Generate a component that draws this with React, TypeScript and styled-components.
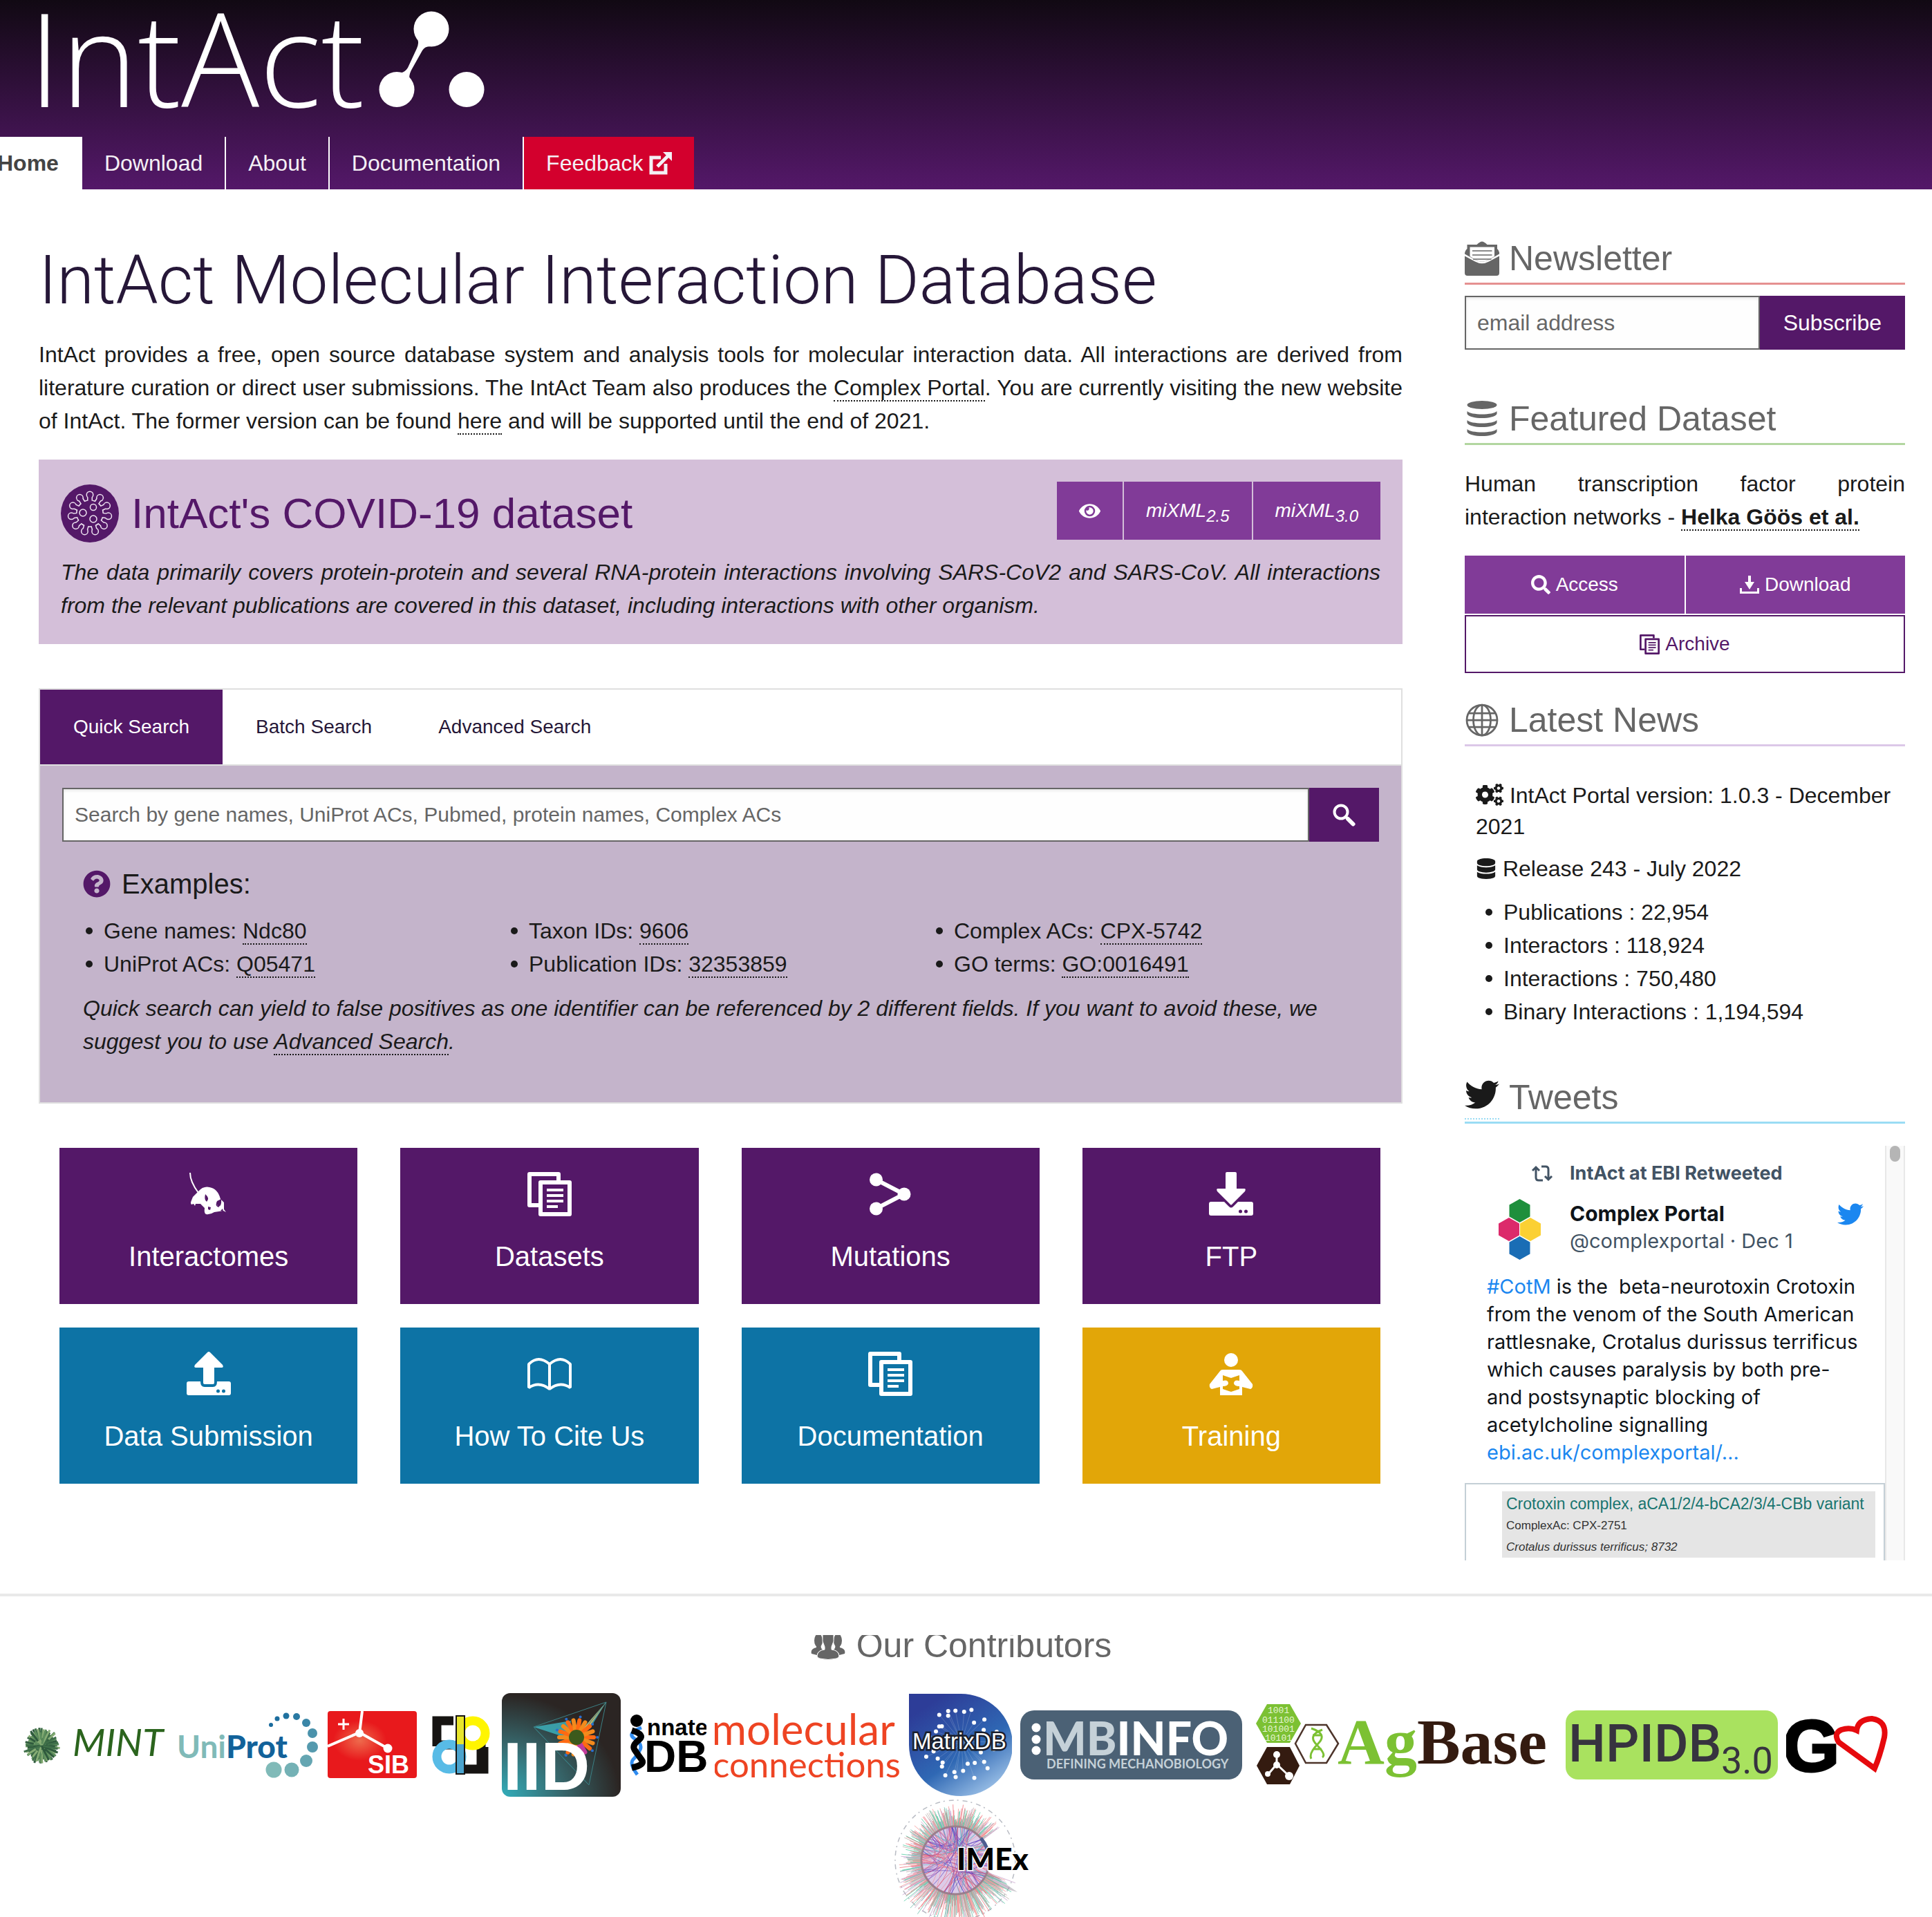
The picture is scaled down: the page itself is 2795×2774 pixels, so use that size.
import React from "react";
import styled, { createGlobalStyle } from "styled-components";
import { FaCogs, FaDatabase, FaEye, FaQuestionCircle, FaSearch, FaTwitter } from "react-icons/fa";

const color = {
  purple: "#541868",
  violet: "#813b98",
  blue: "#0d73a5",
  amber: "#e2a608",
  red: "#d3002d",
  ink: "#1a1a1a",
  grey: "#666666",
  line: "#dfdfdf",
  tweet: "#425364",
  link: "#1b87f0",
};

const sans = `"Liberation Sans", Arial, Helvetica, sans-serif`;
const tweetFont = `Inter, "Liberation Sans", sans-serif`;

const GlobalStyle = createGlobalStyle`
  *, *::before, *::after { box-sizing: border-box; }
  body {
    margin: 0;
    background: #fff;
    color: ${color.ink};
    font-family: ${sans};
    font-size: 32px;
    line-height: 48px;
  }
  h1, h2, h3, p, ul { margin: 0; padding: 0; font-weight: 400; }
  a { color: inherit; text-decoration: none; }
  button, input { font-family: inherit; border-radius: 0; }
  svg { display: block; flex: none; }
`;

/* ---------- header ---------- */

const Header = styled.header`
  background: linear-gradient(#110913, #541869);
`;

const Brand = styled.a`
  display: flex;
  height: 198px;
  padding-left: 50px;
`;

const Nav = styled.nav`
  display: flex;
  margin-left: -36px;
  height: 76px;
`;

const NavLink = styled.a<{ $tone?: "active" | "alert" }>`
  display: flex;
  align-items: center;
  gap: 8px;
  padding: 0 32px;
  color: ${(p) => (p.$tone === "active" ? "#444" : "#f4f0f5")};
  font-weight: ${(p) => (p.$tone === "active" ? 700 : 400)};
  background: ${(p) => (p.$tone === "active" ? "#fff" : p.$tone === "alert" ? color.red : "transparent")};
  & + & { border-left: 2px solid #fff; }
`;

/* ---------- page ---------- */

const Page = styled.main`
  display: grid;
  grid-template-columns: minmax(0, 1973fr) minmax(0, 637fr);
  column-gap: 90px;
  align-items: start;
  padding: 65px 39px 48px 56px;
`;

const Title = styled.h1`
  font-family: Roboto, ${sans};
  font-weight: 300;
  font-size: 98px;
  line-height: 134px;
  margin-bottom: 16px;
  color: #261738;
`;

const Text = styled.p<{ $italic?: boolean; $justify?: boolean }>`
  font-style: ${(p) => (p.$italic ? "italic" : "normal")};
  text-align: ${(p) => (p.$justify ? "justify" : "left")};
`;

const DottedLink = styled.a<{ $bold?: boolean }>`
  border-bottom: 2px dotted ${color.ink};
  font-weight: ${(p) => (p.$bold ? 700 : 400)};
`;

const Covid = styled.section`
  margin-top: 32px;
  padding: 32px;
  background: #d4bfd9;
`;

const CovidHead = styled.div`
  display: flex;
  justify-content: space-between;
  align-items: flex-start;
  margin-bottom: 16px;
`;

const CovidTitle = styled.h2`
  display: flex;
  align-items: center;
  gap: 18px;
  font-size: 62px;
  line-height: 91px;
  color: ${color.purple};
`;

const ButtonGroup = styled.div`
  display: flex;
  flex-wrap: wrap;
  gap: 2px;
`;

const Button = styled.a<{ $outline?: boolean; $grow?: string }>`
  display: flex;
  align-items: center;
  justify-content: center;
  gap: 8px;
  height: 84px;
  padding: 0 32px;
  flex: ${(p) => p.$grow || "none"};
  font-size: 28px;
  color: ${(p) => (p.$outline ? color.purple : "#fff")};
  background: ${(p) => (p.$outline ? "#fff" : color.violet)};
  border: ${(p) => (p.$outline ? `2px solid ${color.purple}` : "0")};
`;

const Formula = styled.em`
  white-space: nowrap;
  sub { font-size: 24px; line-height: 0; }
`;

/* ---------- search ---------- */

const SearchPanel = styled.section`
  margin-top: 64px;
  border: 2px solid ${color.line};
`;

const TabList = styled.div`
  display: flex;
  border-bottom: 2px solid ${color.line};
`;

const Tab = styled.button<{ $active?: boolean }>`
  border: 0;
  padding: 40px 48px;
  font-size: 28px;
  line-height: 28px;
  color: ${(p) => (p.$active ? "#fff" : "#261738")};
  background: ${(p) => (p.$active ? color.purple : "transparent")};
`;

const TabBody = styled.div`
  padding: 32px 32px 64px;
  background: #c4b4cb;
`;

const InputRow = styled.form`
  display: flex;
  height: 78px;
`;

const Input = styled.input<{ $size: number }>`
  flex: 1;
  min-width: 0;
  padding: 0 16px;
  border: 2px solid ${color.grey};
  background: #fefefe;
  box-shadow: inset 0 2px 4px rgba(10, 10, 10, 0.1);
  font-size: ${(p) => p.$size}px;
  &::placeholder { color: ${color.grey}; opacity: 1; }
`;

const Submit = styled.button`
  display: flex;
  align-items: center;
  border: 0;
  padding: 0 34px;
  font-size: 32px;
  color: #fff;
  background: ${color.purple};
`;

const Examples = styled.div`
  padding: 33px 30px 0;
`;

const ExamplesTitle = styled.h3`
  display: flex;
  align-items: center;
  gap: 16px;
  font-size: 40px;
  line-height: 56px;
  margin-bottom: 16px;
`;

const BulletList = styled.ul<{ $columns: number; $indent?: number }>`
  display: grid;
  grid-template-columns: repeat(${(p) => p.$columns}, 1fr);
  list-style: none;
  margin-bottom: 16px;
  padding-left: ${(p) => p.$indent ?? 0}px;
  li { display: flex; align-items: center; gap: 16px; white-space: pre; }
  li::before {
    content: "";
    width: 10px;
    height: 10px;
    margin-left: 4px;
    border-radius: 50%;
    background: ${color.ink};
  }
`;

/* ---------- tiles ---------- */

const Tiles = styled.div`
  display: grid;
  grid-template-columns: repeat(4, 1fr);
  gap: 34px 62px;
  margin-top: 64px;
  padding: 0 32px 0 30px;
`;

const Tile = styled.a<{ $bg: string }>`
  display: flex;
  flex-direction: column;
  align-items: center;
  gap: 30px;
  height: 226px;
  padding-top: 35px;
  font-size: 40px;
  line-height: 56px;
  color: #fff;
  background: ${(p) => p.$bg};
`;

/* ---------- sidebar ---------- */

const Side = styled.section<{ $space?: number }>`
  margin-bottom: ${(p) => p.$space ?? 65}px;
`;

const SideTitle = styled.h2<{ $rule: string; $space: number }>`
  display: flex;
  align-items: center;
  gap: 14px;
  font-size: 50px;
  line-height: 70px;
  color: ${color.grey};
  border-bottom: 3px solid ${(p) => p.$rule};
  margin-bottom: ${(p) => p.$space}px;
`;

const BirdLink = styled.a`
  align-self: flex-end;
  padding-bottom: 9px;
  margin-bottom: 3px;
  border-bottom: 2px dotted #9adcf4;
  color: ${color.ink};
`;

const DatasetButtons = styled(ButtonGroup)`
  margin-top: 32px;
`;

const News = styled.div`
  padding: 0 16px;
`;

const NewsLine = styled.p<{ $drop: number }>`
  line-height: 45px;
  margin-bottom: 16px;
  svg { display: inline-block; vertical-align: -${(p) => p.$drop}px; }
`;

const Timeline = styled.div`
  display: flex;
  height: 600px;
  overflow: hidden;
  font-family: ${tweetFont};
  line-height: 40px;
`;

const Tweet = styled.article`
  display: flex;
  flex-direction: column;
  flex: 1;
  min-width: 0;
`;

const TweetHead = styled.div`
  display: grid;
  grid-template-columns: 96px 1fr 36px;
  column-gap: 24px;
  padding: 20px 33px 0 32px;
`;

const Retweeted = styled.div`
  font-size: 27px;
  font-weight: 700;
  color: ${color.tweet};
`;

const RetweetCell = styled.div`
  display: flex;
  justify-content: flex-end;
  align-items: center;
`;

const TweetName = styled.div`
  padding-top: 18px;
  font-size: 29px;
  color: ${color.tweet};
  strong { display: block; font-size: 30px; color: #0f1419; }
`;

const AvatarCell = styled.div`
  padding: 16px 0 0;
`;

const BirdCell = styled.div`
  padding-top: 20px;
  color: ${color.link};
`;

const TweetText = styled.p`
  padding: 12px 20px 24px 32px;
  font-size: 29px;
  line-height: 40px;
  color: #0f1419;
  white-space: pre-wrap;
  a { color: ${color.link}; }
`;

const Card = styled.div`
  flex: 1;
  padding: 10px 12px 4px 52px;
  border: 2px solid #c4cfd6;
  border-bottom: 0;
  font-family: ${sans};
`;

const CardBody = styled.div`
  padding: 2px 6px 0;
  background: #e5e5e5;
  color: #333;
  font-size: 17px;
  line-height: 31px;
  white-space: nowrap;
  strong { display: block; font-weight: 400; font-size: 23px; line-height: 32px; color: #197570; }
  em { display: block; }
`;

const Track = styled.div`
  width: 29px;
  padding: 0 5px;
  border: solid #e8e8e8;
  border-width: 0 2px;
  background: #f9f9f9;
`;

const Thumb = styled.div`
  height: 23px;
  border-radius: 8px;
  background: #b5b5b5;
`;

/* ---------- contributors ---------- */

const Contributors = styled.footer`
  border-top: 4px solid #e9e9e9;
  padding-top: 56px;
`;

const ContributorsTitle = styled.h2`
  display: flex;
  align-items: center;
  justify-content: center;
  gap: 16px;
  height: 40px;
  padding: 0 14px 10px 0;
  overflow: hidden;
  font-size: 50px;
  line-height: 30px;
  color: ${color.grey};
`;

const LogoRow = styled.div`
  display: flex;
  flex-wrap: wrap;
  align-items: center;
  justify-content: center;
  column-gap: 12px;
  row-gap: 2px;
  margin-top: 44px;
  a { display: flex; align-items: center; }
`;

/* ---------- icons ---------- */

const IntActLogo = () => (
  <svg width="670" height="198" viewBox="50 0 670 198" fill="#fff" role="img" aria-label="IntAct">
    <text x="41" y="155" fontFamily="'Open Sans', sans-serif" fontWeight="300" fontSize="188">IntAct</text>
    <circle cx="624" cy="42" r="25.5" />
    <circle cx="574" cy="129.500" r="25.500" />
    <circle cx="675" cy="129.500" r="25.500" />
    <path d="M603 54 Q607 61 603 70 L590 98 Q585 106 578 105 L592 113 Q592 106 597 98 L611 73 Q615 66 625 67Z" />
  </svg>
);

const ExternalIcon = () => (
  <svg width="33" height="33" viewBox="0 0 33 33" fill="none" stroke="#f4f0f5">
    <path d="M17 8H3v22h21V17" strokeWidth="5" />
    <path d="M12 21 27 6" strokeWidth="5" />
    <path d="M20 0h13v13Z" fill="#f4f0f5" stroke="none" />
  </svg>
);

const petals = Array.from({ length: 11 }, (_, i) => (i * 2 * Math.PI) / 11 - Math.PI / 2);

const Lollipops = ({ fill, core, stem, knob }: { fill: string; core: number; stem: number; knob: number }) => (
  <g fill={fill} stroke="none">
    <circle cx="42" cy="42" r={core} />
    {petals.map((a) => (
      <g key={a}>
        <path d={`M42 42 L${42 + 27 * Math.cos(a)} ${42 + 27 * Math.sin(a)}`} stroke={fill} strokeWidth={stem} />
        <circle cx={42 + 27 * Math.cos(a)} cy={42 + 27 * Math.sin(a)} r={knob} />
      </g>
    ))}
  </g>
);

const VirusIcon = () => (
  <svg width="84" height="84" viewBox="0 0 84 84">
    <circle cx="42" cy="42" r="42" fill={color.purple} />
    <Lollipops fill="#efe4f2" core={20} stem={8} knob={5.5} />
    <Lollipops fill={color.purple} core={18.5} stem={5} knob={4} />
    <g fill="none" stroke="#efe4f2" strokeWidth="1.500">
      <circle cx="32" cy="41" r="5" />
      <circle cx="47" cy="33" r="4.500" />
      <circle cx="47" cy="50" r="5" />
    </g>
  </svg>
);

const MagnifierIcon = () => (
  <svg width="33" height="33" viewBox="0 0 33 33" fill="none" stroke="#fff">
    <circle cx="12" cy="12" r="9.500" strokeWidth="4" />
    <path d="M18.500 18.500 22 22" strokeWidth="4" />
    <path d="m22 22 7.500 7.500" strokeWidth="6" strokeLinecap="round" />
  </svg>
);

const TrayIcon = () => (
  <svg width="28" height="27" viewBox="0 0 28 27" fill="currentColor">
    <path d="M12 0h4v9h5l-7 11-7-11h5ZM0 18h3v5h22v-5h3v8H0Z" />
  </svg>
);

const CopyIcon = ({ size }: { size: number }) => (
  <svg width={size} height={size} viewBox="0 0 64 64" fill="none" stroke="currentColor" strokeLinejoin="round">
    <path d="M16 48H3V3h42v9" strokeWidth="6" />
    <path d="M19 15h42v46H19Z" strokeWidth="6" />
    <path d="M28 26h24M28 34h24M28 42h24M28 50h16" strokeWidth="4" />
  </svg>
);

const MailIcon = () => (
  <svg width="50" height="50" viewBox="0 0 100 100" fill={color.grey}>
    <path d="M0 43 30 59Q50 70 70 59L100 43V92Q100 100 92 100H8Q0 100 0 92Z" />
    <path d="M7 10H35Q44 1 50 1T65 10H94V22Q101 28 100 37L70 54Q50 65 30 54L0 37Q0 28 7 22Z" />
    <path d="M15 17H86V44L69 54Q50 65 31 54L15 44Z" fill="#fff" />
    <path d="M22 28H79M22 40H79M24 52H77" stroke={color.grey} strokeWidth="3" />
  </svg>
);

const disc = (y: number) => `M7 ${y}C18 ${y + 12} 82 ${y + 12} 93 ${y}V${y + 8}C84 ${y + 24} 16 ${y + 24} 7 ${y + 8}Z`;

const DiscsIcon = () => (
  <svg width="50" height="52" viewBox="0 0 100 104" fill={color.grey}>
    <ellipse cx="50" cy="12" rx="43" ry="12" />
    <path d={disc(30) + disc(56) + disc(82)} />
  </svg>
);

const GlobeIcon = () => (
  <svg width="50" height="50" viewBox="0 0 100 100" fill="none" stroke={color.grey} strokeWidth="5.500">
    <circle cx="50" cy="50" r="44" />
    <ellipse cx="50" cy="50" rx="25" ry="44" />
    <path d="M50 6V94M6 50H94M12 30H88M12 70H88" />
  </svg>
);

const PeopleIcon = () => (
  <svg width="50" height="50" viewBox="0 0 50 50" fill={color.grey}>
    <ellipse cx="11" cy="18" rx="6" ry="10" />
    <ellipse cx="39" cy="18" rx="6" ry="10" />
    <path d="M8 22h6l1 7 2 2Q9 34 9 39L1 37Q-1 30 8 28ZM42 22h-6l-1 7-2 2Q41 34 41 39L49 37Q51 30 42 28Z" />
    <path d="M17 6h16v13l-3 8v4q10 1 11 9 0 3-4 4-12 3-24 0-4-1-4-4 1-8 11-9v-4l-3-8Z" stroke="#fff" strokeWidth="1" />
  </svg>
);

const RetweetIcon = () => (
  <svg width="32" height="24" viewBox="0 0 32 24" fill="none" stroke={color.tweet} strokeWidth="3">
    <path d="M7 3v15q0 4 4 4h6M2 8l5-5 5 5M25 21V6q0-4-4-4h-6M20 16l5 5 5-5" />
  </svg>
);

const hex = (cx: number, cy: number) =>
  `${cx},${cy - 17} ${cx + 15},${cy - 8.5} ${cx + 15},${cy + 8.5} ${cx},${cy + 17} ${cx - 15},${cy + 8.5} ${cx - 15},${cy - 8.5}`;

const Avatar = () => (
  <svg width="96" height="96" viewBox="0 0 96 96">
    <polygon points={hex(47.5, 18)} fill="#1e8f3c" />
    <polygon points={hex(32, 45)} fill="#dc2a6b" />
    <polygon points={hex(63, 45)} fill="#fbd033" />
    <polygon points={hex(47.5, 72)} fill="#1a6db5" />
  </svg>
);

const TileSvg = ({ children }: { children: React.ReactNode }) => (
  <svg width="64" height="64" viewBox="0 0 64 64" fill="#fff">{children}</svg>
);

const MouseIcon = () => (
  <TileSvg>
    <path d="M5 1Q5 14 17 30" fill="none" stroke="#fff" strokeWidth="2" />
    <path d="M17 28Q24 20 33 22Q45 24 49 39L54 44L54 54L57 58L53 56Q47 57 40 58Q34 62 28 61Q25 60 26 52L20 46H13L12 49L10 46L7 47Q5 45 7 41L9 36Z" />
    <path d="M27 32Q34 38 29 43Q25 40 27 32M50 39Q51 50 46 50Q42 45 44 42ZM31 50l4 1-1 4-3-1ZM52 53l1 4-4-1Z" fill={color.purple} />
    <path d="M44 44Q42 50 47 50" stroke={color.purple} strokeWidth="1.500" fill="none" />
  </TileSvg>
);

const NodesIcon = () => (
  <TileSvg>
    <path d="M11.500 11 52 32 11.500 53" fill="none" stroke="#fff" strokeWidth="6" />
    <circle cx="11.500" cy="11" r="9.500" />
    <circle cx="52" cy="32" r="9.500" />
    <circle cx="11.500" cy="53" r="9.500" />
  </TileSvg>
);

const FtpIcon = () => (
  <TileSvg>
    <path d="M26 0h12q2 0 2 2v22h11q3 0 1 4L34 46q-2 3-4 0L12 28q-2-4 1-4h11V2q0-2 2-2Z" />
    <path
      fillRule="evenodd"
      d="M3 43h19l7 7q3 3 6 0l7-7h19q3 0 3 3v14q0 3-3 3H3q-3 0-3-3V46q0-3 3-3ZM43 57a2.500 2.500 0 1 0 5 0 2.500 2.500 0 1 0-5 0M51 57a2.500 2.500 0 1 0 5 0 2.500 2.500 0 1 0-5 0"
    />
  </TileSvg>
);

const UploadIcon = () => (
  <TileSvg>
    <path d="M30 1q2-2 4 0l18 18q2 4-1 4H40v22q0 2-2 2H26q-2 0-2-2V23H13q-3 0-1-4Z" />
    <path
      fillRule="evenodd"
      d="M3 43h17q0 8 6 8h12q6 0 6-8h17q3 0 3 3v14q0 3-3 3H3q-3 0-3-3V46q0-3 3-3ZM43 57a2.500 2.500 0 1 0 5 0 2.500 2.500 0 1 0-5 0M51 57a2.500 2.500 0 1 0 5 0 2.500 2.500 0 1 0-5 0"
    />
  </TileSvg>
);

const BookIcon = () => (
  <TileSvg>
    <path
      d="M2 52V18Q16 4 32 18Q48 4 62 18V52Q47 42 32 54Q17 42 2 52ZM32 18V54"
      fill="none"
      stroke="#fff"
      strokeWidth="4"
      strokeLinejoin="bevel"
    />
  </TileSvg>
);

const ReaderIcon = () => (
  <TileSvg>
    <circle cx="32" cy="12" r="10" />
    <path
      fillRule="evenodd"
      d="M20 26H44Q47 26 48 28L63 47Q64 52 60 54L48 51V63H16V51L4 54Q0 52 1 47L16 28Q17 26 20 26ZM20 34V42Q28 40 28 46Q27 50 20 50V54L32 58L44 54V50Q37 50 36 46Q36 40 44 42V34L32 38Z"
    />
  </TileSvg>
);

/* ---------- contributor logos ---------- */

const range = (n: number) => Array.from({ length: n }, (_, i) => i);
const polar = (cx: number, cy: number, r: number, a: number) => `${(cx + r * Math.cos(a)).toFixed(1)} ${(cy + r * Math.sin(a)).toFixed(1)}`;
const noise = (i: number) => Math.abs(Math.sin(i * 12.9898) * 43758.5453) % 1;

const MintLogo = () => (
  <svg width="212" height="64" viewBox="0 0 212 64">
    <circle cx="30" cy="33" r="20" fill="#4d7b52" />
    {range(80).map((i) => (
      <path
        key={i}
        d={`M${polar(30, 33, noise(i) * 14, i * 2.4)}L${polar(30, 33, 19 + noise(i + 9) * 8, i * 2.4)}`}
        stroke={["#3f6f49", "#86ac74", "#5c8d5c", "#2f5a3d"][i % 4]}
        strokeWidth="3"
      />
    ))}
    <text x="75" y="48" fontFamily="Lato, sans-serif" fontStyle="italic" fontSize="55" fill="#2b641d">MINT</text>
  </svg>
);

const UniProtLogo = () => (
  <svg width="208" height="96" viewBox="0 0 208 96">
    <text x="2" y="67" fontFamily="Lato, sans-serif" fontWeight="700" fontSize="46" fill="#80bab8">
      Uni<tspan fill="#12629a" fontWeight="900">Prot</tspan>
    </text>
    {[
      [138, 19, 3, "#1a6b9d"], [147, 10, 3.5, "#1c6d9e"], [160, 6, 4.5, "#20719f"], [175, 7, 5, "#2b7aa3"], [189, 16, 6, "#3a86a7"],
      [198, 31, 7, "#4a92ab"], [198, 51, 8, "#559aae"], [189, 71, 9, "#65a6b2"], [168, 84, 10.5, "#74b1b5"], [142, 84, 11.5, "#80bab8"],
    ].map(([x, y, r, f]) => (
      <circle key={`${x}-${y}`} cx={x} cy={y} r={r} fill={String(f)} />
    ))}
  </svg>
);

const SibLogo = () => (
  <svg width="130" height="98" viewBox="0 0 130 98">
    <defs>
      <radialGradient id="sibGlow" cx="0.36" cy="0.44" r="0.3">
        <stop offset="0" stopColor="#ee6a4c" />
        <stop offset="1" stopColor="#e8191c" />
      </radialGradient>
    </defs>
    <rect width="129" height="97" rx="4" fill="url(#sibGlow)" />
    <path d="M50 0 46 32M0 51 46 31 87 54" stroke="#fff" strokeWidth="4" fill="none" />
    <path d="M23 11v16M15 19h16" stroke="#fff" strokeWidth="3" />
    <circle cx="46" cy="32" r="6" fill="#fff" />
    <circle cx="87" cy="54" r="6.500" fill="#fff" />
    <text x="58" y="90" fontFamily={sans} fontWeight="700" fontSize="36" fill="#fff">SIB</text>
  </svg>
);

const DipLogo = () => (
  <svg width="98" height="86" viewBox="0 0 98 86" fill="none">
    <path d="M16 45V8H40M22 43H40M46 78H84V46" stroke="#161412" strokeWidth="13" />
    <path d="M80 36V78" stroke="#161412" strokeWidth="13" />
    <circle cx="68" cy="26" r="18" stroke="#fff500" strokeWidth="13" />
    <circle cx="34" cy="60" r="18" stroke="#58bbe6" strokeWidth="13" />
    <path d="M50 2V42" stroke="#e8e52c" strokeWidth="11" />
    <path d="M50 42V84" stroke="#4ba3cd" strokeWidth="11" />
    <path d="M44 1V85H56V1Z" stroke="#161412" strokeWidth="2" />
  </svg>
);

const IidLogo = () => (
  <svg width="172" height="150" viewBox="0 0 172 150">
    <defs>
      <radialGradient id="iidBg" cx="0" cy="1" r="1.100">
        <stop offset="0" stopColor="#32aebb" />
        <stop offset="0.45" stopColor="#37696e" />
        <stop offset="0.9" stopColor="#2b2523" />
      </radialGradient>
    </defs>
    <rect width="172" height="150" rx="12" fill="url(#iidBg)" />
    <path d="M46 49 98 66 100 40ZM151 13 104 66 132 44Z" fill="#3db6c2" opacity="0.8" />
    <path d="M151 13 112 58 124 52Z" fill="#c9b46a" />
    <path d="M46 49 151 13 126 133ZM46 49 126 133M151 13 90 90" stroke="#3b8085" fill="none" />
    {range(18).map((i) => (
      <path
        key={i}
        d={`M108 64L${polar(108, 64, 25, i * 0.349)}`}
        stroke={i > 2 && i < 5 ? "#c23b9b" : i % 2 ? "#f38a1c" : "#ff6a13"}
        strokeWidth="6"
        strokeLinecap="round"
      />
    ))}
    {range(9).map((i) => (
      <circle key={i} cx={108 + 30 * Math.cos(i * 0.7)} cy={64 + 30 * Math.sin(i * 0.7)} r="2" fill="#2a6fd0" />
    ))}
    <circle cx="108" cy="64" r="11" fill="#3c5a1c" />
    <text x="2" y="140" fontFamily={sans} fontWeight="700" fontSize="98" fill="#fff">IID</text>
  </svg>
);

const InnateLogo = () => (
  <svg width="112" height="90" viewBox="0 0 112 90">
    <ellipse cx="11" cy="10" rx="9" ry="9" fill="#000" />
    <path d="M18 20Q-4 28 8 36T16 52T6 66T12 88" fill="none" stroke="#2f8cf0" strokeWidth="5" />
    <path d="M4 24Q24 30 14 38T8 52T18 66T4 78" fill="none" stroke="#000" strokeWidth="9" />
    <text x="26" y="31" fontFamily={sans} fontWeight="700" fontSize="33">nnate</text>
    <text x="22" y="84" fontFamily={sans} fontWeight="700" fontSize="64">DB</text>
  </svg>
);

const MolConLogo = () => (
  <svg width="269" height="108" viewBox="0 0 269 108" fill="#ee4423" fontFamily="Lato, sans-serif">
    <text x="-5" y="54" fontSize="62">molecular</text>
    <text x="-3" y="101" fontSize="51">connections</text>
  </svg>
);

const MatrixLogo = () => (
  <svg width="149" height="150" viewBox="0 0 149 150">
    <defs>
      <linearGradient id="matrixBg" x1="0.2" y1="0.1" x2="0.8" y2="1">
        <stop offset="0" stopColor="#2d3d98" />
        <stop offset="0.55" stopColor="#2f68b4" />
        <stop offset="1" stopColor="#a6c9ec" />
      </linearGradient>
    </defs>
    <path d="M0 1H74A75 74 0 1 1 0 75Z" fill="url(#matrixBg)" />
    {range(34).map((i) => {
      const a = i * 0.5 + 0.3;
      const r = 32 + noise(i) * 24;
      return (
        <g key={i}>
          <path d={`M76 70L${polar(76, 70, r, a)}`} stroke="#fff" strokeWidth="0.500" opacity="0.35" />
          <circle cx={76 + r * Math.cos(a)} cy={70 + r * Math.sin(a)} r="3" fill="#fff" />
        </g>
      );
    })}
    <text x="5" y="81" fontFamily={sans} fontSize="33" fill="#fff" stroke="#1a1f2c" strokeWidth="5" paintOrder="stroke">MatrixDB</text>
  </svg>
);

const MbInfoLogo = () => (
  <svg width="321" height="100" viewBox="0 0 321 100" fontFamily="Lato, sans-serif">
    <rect width="321" height="100" rx="20" fill="#4b6175" />
    <g fill="#fff">
      <circle cx="23" cy="25" r="6.500" />
      <circle cx="23" cy="42" r="6.500" />
      <circle cx="23" cy="58" r="6.500" />
    </g>
    <text x="33" y="65" fontWeight="900" fontSize="66" fill="#fff">
      <tspan fill="#c5d1d8">MB</tspan>INFO
    </text>
    <text x="38" y="84" fontWeight="700" fontSize="18" fill="#c5d1d8">DEFINING MECHANOBIOLOGY</text>
  </svg>
);

const AgBaseLogo = () => (
  <svg width="444" height="120" viewBox="0 0 444 120">
    <path d="M24 1H57L73 29 57 57H24L8 29Z" fill="#7cc133" />
    <g fontFamily="'Liberation Mono', monospace" fontSize="13" fill="#e6f5d3">
      <text x="25" y="14">1001</text>
      <text x="17" y="28">011100</text>
      <text x="17" y="41">101001</text>
      <text x="21" y="54">10101</text>
    </g>
    <path d="M24 63H57L71 90 57 117H24L9 90Z" fill="#341b10" />
    <path d="M38 74V88L26 102M38 88 55 104" stroke="#fff" strokeWidth="3" fill="none" />
    <g fill="#fff">
      <circle cx="38" cy="74" r="5" />
      <circle cx="38" cy="89" r="5" />
      <circle cx="25" cy="102" r="4" />
      <circle cx="56" cy="105" r="6" />
    </g>
    <path d="M80 31H110L127 58 110 86H80L65 58Z" fill="#fff" stroke="#4d342a" strokeWidth="2.500" />
    <path d="M88 36Q112 44 98 58T88 80M104 38Q82 46 96 60T104 78M90 46h14M91 66h12" fill="none" stroke="#7cc133" strokeWidth="3" />
    <text x="126" y="87" fontFamily="'Liberation Serif', serif" fontWeight="700" fontSize="94" fill="#7cc133">
      Ag<tspan fill="#341b10">Base</tspan>
    </text>
  </svg>
);

const HpidbLogo = () => (
  <svg width="307" height="100" viewBox="0 0 307 100" fontFamily="Roboto, sans-serif" fill="#37333f">
    <rect width="307" height="100" rx="18" fill="#a9e25f" />
    <text x="4" y="74" fontSize="76" fontWeight="500">HPIDB</text>
    <text x="225" y="91" fontSize="54">3.0</text>
  </svg>
);

const GoLogo = () => (
  <svg width="181" height="90" viewBox="0 0 181 90">
    <text x="-5" y="83" fontFamily={sans} fontWeight="700" fontSize="106" stroke="#000" strokeWidth="3">G</text>
    <path d="M128 79 76 41Q68 28 80 23Q92 19 102 24Q104 8 124 7Q146 10 142 34Q136 60 128 79Z" fill="#fff" stroke="#e60a0e" strokeWidth="8" />
  </svg>
);

const ImexLogo = () => (
  <svg width="220" height="172" viewBox="0 0 220 172">
    <circle cx="94" cy="90" r="87" fill="none" stroke="#b9bcc4" strokeWidth="1.500" strokeDasharray="7 5 2 6" />
    <path d="M138 104 184 136 134 122Z" fill="#9c93a0" opacity="0.5" />
    {range(520).map((i) => {
      const a = 0.35 + (i * 5.3) / 520;
      const reach = Math.sin(a) > 0.3 ? 42 : 28;
      return (
        <path
          key={i}
          d={`M${polar(94, 90, 48, a)}L${polar(94, 90, 54 + noise(i) * reach, a)}`}
          stroke={["#f0606c", "#3fc79a", "#c59bc9", "#f28c8c", "#57b49f", "#b7a8a2"][Math.floor(noise(i + 3) * 6)]}
          opacity="0.7"
        />
      );
    })}
    <circle cx="94" cy="90" r="49" fill="#dccbe8" stroke="#9b7f8c" strokeWidth="3" />
    {range(130).map((i) => (
      <path
        key={i}
        d={`M${polar(94, 90, 48, noise(i) * 6.28)}Q${polar(94, 90, 16, i)} ${polar(94, 90, 48, noise(i + 50) * 6.28)}`}
        fill="none"
        stroke={["#5a3fc0", "#e2566f", "#62b7c6", "#a35bb4", "#ef8f9c"][i % 5]}
        opacity="0.65"
      />
    ))}
    <path d="M131 58Q143 72 143 90" stroke="#4d5c90" strokeWidth="5" fill="none" />
    <text x="96" y="104" fontFamily="Lato, sans-serif" fontWeight="900" fontSize="44" stroke="#fff" strokeWidth="3" paintOrder="stroke">IMEx</text>
  </svg>
);

/* ---------- data ---------- */

const examples: [string, string][] = [
  ["Gene names", "Ndc80"],
  ["Taxon IDs", "9606"],
  ["Complex ACs", "CPX-5742"],
  ["UniProt ACs", "Q05471"],
  ["Publication IDs", "32353859"],
  ["GO terms", "GO:0016491"],
];

const tiles = [
  { label: "Interactomes", bg: color.purple, icon: <MouseIcon /> },
  { label: "Datasets", bg: color.purple, icon: <CopyIcon size={64} /> },
  { label: "Mutations", bg: color.purple, icon: <NodesIcon /> },
  { label: "FTP", bg: color.purple, icon: <FtpIcon /> },
  { label: "Data Submission", bg: color.blue, icon: <UploadIcon /> },
  { label: "How To Cite Us", bg: color.blue, icon: <BookIcon /> },
  { label: "Documentation", bg: color.blue, icon: <CopyIcon size={64} /> },
  { label: "Training", bg: color.amber, icon: <ReaderIcon /> },
];

const stats = ["Publications : 22,954", "Interactors : 118,924", "Interactions : 750,480", "Binary Interactions : 1,194,594"];

const logos = [
  MintLogo, UniProtLogo, SibLogo, DipLogo, IidLogo, InnateLogo, MolConLogo,
  MatrixLogo, MbInfoLogo, AgBaseLogo, HpidbLogo, GoLogo, ImexLogo,
];

export default function App() {
  return (
    <>
      <GlobalStyle />
      <Header>
        <Brand href="#home"><IntActLogo /></Brand>
        <Nav>
          <NavLink href="#home" $tone="active">Home</NavLink>
          <NavLink href="#download">Download</NavLink>
          <NavLink href="#about">About</NavLink>
          <NavLink href="#documentation">Documentation</NavLink>
          <NavLink href="#feedback" $tone="alert">Feedback<ExternalIcon /></NavLink>
        </Nav>
      </Header>

      <Page>
        <div>
          <Title>IntAct Molecular Interaction Database</Title>
          <Text $justify>
            IntAct provides a free, open source database system and analysis tools for molecular interaction data. All
            interactions are derived from literature curation or direct user submissions. The IntAct Team also produces
            the <DottedLink href="#complex">Complex Portal</DottedLink>. You are currently visiting the new website of
            IntAct. The former version can be found <DottedLink href="#former">here</DottedLink> and will be supported
            until the end of 2021.
          </Text>

          <Covid>
            <CovidHead>
              <CovidTitle><VirusIcon />IntAct's COVID-19 dataset</CovidTitle>
              <ButtonGroup>
                <Button href="#view" aria-label="View"><FaEye size={31} /></Button>
                <Button href="#mixml25"><Formula>miXML<sub>2.5</sub></Formula></Button>
                <Button href="#mixml30"><Formula>miXML<sub>3.0</sub></Formula></Button>
              </ButtonGroup>
            </CovidHead>
            <Text $italic $justify>
              The data primarily covers protein-protein and several RNA-protein interactions involving SARS-CoV2 and
              SARS-CoV. All interactions from the relevant publications are covered in this dataset, including
              interactions with other organism.
            </Text>
          </Covid>

          <SearchPanel>
            <TabList role="tablist">
              <Tab role="tab" aria-selected="true" $active>Quick Search</Tab>
              <Tab role="tab" aria-selected="false">Batch Search</Tab>
              <Tab role="tab" aria-selected="false">Advanced Search</Tab>
            </TabList>
            <TabBody>
              <InputRow>
                <Input
                  $size={30}
                  type="search"
                  aria-label="Search"
                  placeholder="Search by gene names, UniProt ACs, Pubmed, protein names, Complex ACs"
                />
                <Submit type="button" aria-label="Search"><MagnifierIcon /></Submit>
              </InputRow>
              <Examples>
                <ExamplesTitle><FaQuestionCircle size={40} color={color.purple} />Examples:</ExamplesTitle>
                <BulletList $columns={3}>
                  {examples.map(([name, value]) => (
                    <li key={name}><span>{name}: <DottedLink href="#example">{value}</DottedLink></span></li>
                  ))}
                </BulletList>
                <Text $italic>
                  Quick search can yield to false positives as one identifier can be referenced by 2 different fields.
                  If you want to avoid these, we suggest you to use <DottedLink href="#advanced">Advanced Search</DottedLink>.
                </Text>
              </Examples>
            </TabBody>
          </SearchPanel>

          <Tiles>
            {tiles.map((t) => (
              <Tile key={t.label} href="#tile" $bg={t.bg}>{t.icon}{t.label}</Tile>
            ))}
          </Tiles>
        </div>

        <aside>
          <Side>
            <SideTitle $rule="#e59090" $space={16}><MailIcon />Newsletter</SideTitle>
            <InputRow>
              <Input $size={32} type="email" aria-label="email address" placeholder="email address" />
              <Submit type="button">Subscribe</Submit>
            </InputRow>
          </Side>

          <Side $space={33}>
            <SideTitle $rule="#b2d6a0" $space={32}><DiscsIcon />Featured Dataset</SideTitle>
            <Text $justify>
              Human transcription factor protein interaction networks - <DottedLink href="#goos" $bold>Helka Göös et al.</DottedLink>
            </Text>
            <DatasetButtons>
              <Button href="#access" $grow="1 1 40%"><FaSearch size={28} />Access</Button>
              <Button href="#get" $grow="1 1 40%"><TrayIcon />Download</Button>
              <Button href="#archive" $grow="1 1 100%" $outline><CopyIcon size={29} />Archive</Button>
            </DatasetButtons>
          </Side>

          <Side>
            <SideTitle $rule="#dcc8e8" $space={49}><GlobeIcon />Latest News</SideTitle>
            <News>
              <NewsLine $drop={8}><FaCogs size={40} /> IntAct Portal version: 1.0.3 - December 2021</NewsLine>
              <NewsLine $drop={4}><FaDatabase size={30} /> Release 243 - July 2022</NewsLine>
              <BulletList $columns={1} $indent={10}>
                {stats.map((s) => <li key={s}>{s}</li>)}
              </BulletList>
            </News>
          </Side>

          <Side $space={0}>
            <SideTitle $rule="#9adcf4" $space={32}>
              <BirdLink href="#twitter" aria-label="Twitter"><FaTwitter size={50} /></BirdLink>
              Tweets
            </SideTitle>
            <Timeline>
              <Tweet>
                <TweetHead>
                  <RetweetCell><RetweetIcon /></RetweetCell>
                  <Retweeted>IntAct at EBI Retweeted</Retweeted>
                  <span />
                  <AvatarCell><Avatar /></AvatarCell>
                  <TweetName><strong>Complex Portal</strong>@complexportal · Dec 1</TweetName>
                  <BirdCell><FaTwitter size={38} /></BirdCell>
                </TweetHead>
                <TweetText>
                  <a href="#cotm">#CotM</a>
                  {" is the  beta-neurotoxin Crotoxin from the venom of the South American rattlesnake, Crotalus durissus terrificus which causes paralysis by both pre-\nand postsynaptic blocking of acetylcholine signalling "}
                  <a href="#ebi">ebi.ac.uk/complexportal/…</a>
                </TweetText>
                <Card>
                  <CardBody>
                    <strong>Crotoxin complex, aCA1/2/4-bCA2/3/4-CBb variant</strong>
                    ComplexAc: CPX-2751
                    <em>Crotalus durissus terrificus; 8732</em>
                  </CardBody>
                </Card>
              </Tweet>
              <Track><Thumb /></Track>
            </Timeline>
          </Side>
        </aside>
      </Page>

      <Contributors>
        <ContributorsTitle><PeopleIcon />Our Contributors</ContributorsTitle>
        <LogoRow>
          {logos.map((Logo, i) => (
            <a key={i} href="#contributor"><Logo /></a>
          ))}
        </LogoRow>
      </Contributors>
    </>
  );
}
